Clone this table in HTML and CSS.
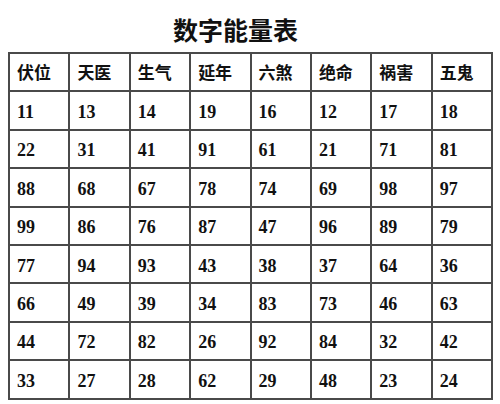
FILE: index.html
```html
<!DOCTYPE html>
<html lang="zh">
<head>
<meta charset="utf-8">
<link rel="stylesheet" href="styles.css">
</head>
<body>
<h1 class="title">数字能量表</h1>
<table class="grid">
<thead>
<tr><th>伏位</th><th>天医</th><th>生气</th><th>延年</th><th>六煞</th><th>绝命</th><th>祸害</th><th>五鬼</th></tr>
</thead>
<tbody>
<tr><td>11</td><td>13</td><td>14</td><td>19</td><td>16</td><td>12</td><td>17</td><td>18</td></tr>
<tr><td>22</td><td>31</td><td>41</td><td>91</td><td>61</td><td>21</td><td>71</td><td>81</td></tr>
<tr><td>88</td><td>68</td><td>67</td><td>78</td><td>74</td><td>69</td><td>98</td><td>97</td></tr>
<tr><td>99</td><td>86</td><td>76</td><td>87</td><td>47</td><td>96</td><td>89</td><td>79</td></tr>
<tr><td>77</td><td>94</td><td>93</td><td>43</td><td>38</td><td>37</td><td>64</td><td>36</td></tr>
<tr><td>66</td><td>49</td><td>39</td><td>34</td><td>83</td><td>73</td><td>46</td><td>63</td></tr>
<tr><td>44</td><td>72</td><td>82</td><td>26</td><td>92</td><td>84</td><td>32</td><td>42</td></tr>
<tr><td>33</td><td>27</td><td>28</td><td>62</td><td>29</td><td>48</td><td>23</td><td>24</td></tr>
</tbody>
</table>
</body>
</html>
```
FILE: styles.css
```css
html, body {
  margin: 0;
  padding: 0;
  background: #fff;
}
body {
  width: 500px;
  height: 404px;
  overflow: hidden;
}
.title {
  margin: 0;
  padding: 14px 0 0 173px;
  height: 52px;
  box-sizing: border-box;
  font-family: "Noto Sans CJK SC", sans-serif;
  font-weight: 700;
  font-size: 25px;
  line-height: 30px;
  color: #111;
}
.grid {
  margin-left: 8px;
  width: 485px;
  border-collapse: collapse;
  table-layout: fixed;
}
.grid th, .grid td {
  border: 2px solid #4a4a4a;
  height: 38.4px;
  padding: 0 0 0 7px;
  box-sizing: border-box;
  text-align: left;
  vertical-align: middle;
  color: #111;
}
.grid th {
  font-family: "Noto Sans CJK SC", sans-serif;
  font-weight: 700;
  font-size: 17px;
  line-height: 20px;
}
.grid td {
  font-family: "Liberation Serif", serif;
  font-weight: 700;
  font-size: 18px;
  line-height: 20px;
  padding-top: 3px;
}
```
